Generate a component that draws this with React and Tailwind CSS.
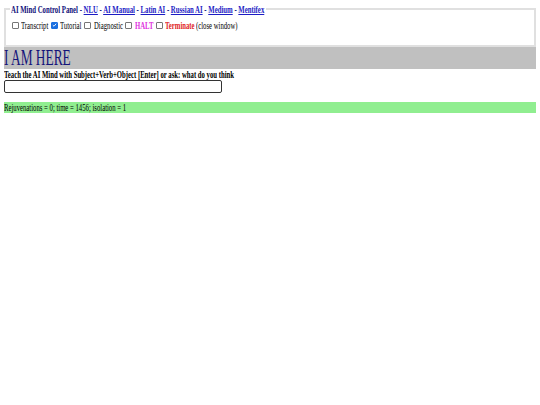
import { useState } from 'react';

// the reference page is drawn narrow, so every text line is squeezed on x
const Check = ({ on, toggle, className = '' }) => (
  <span
    role="checkbox"
    aria-checked={on}
    onClick={toggle}
    className={`flex items-center justify-center w-[7px] h-[7px] shrink-0 rounded-[1px] border ${
      on ? 'bg-[#1a6fe0] border-[#1a6fe0]' : 'bg-white border-[#767676]'
    } ${className}`}
  >
    {on && (
      <svg viewBox="0 0 6 6" className="w-[6px] h-[6px]">
        <path d="M1 3.2 L2.4 4.5 L5 1.5" fill="none" stroke="white" strokeWidth="1.1" />
      </svg>
    )}
  </span>
);

const Label = ({ className, children }) => (
  <span className={`block shrink-0 whitespace-nowrap ${className}`}>
    <span className="block w-max origin-left scale-x-[0.61]">{children}</span>
  </span>
);

const Link = ({ children }) => (
  <a href="#" className="underline text-[#1c1cc4]">{children}</a>
);

export default function App() {
  const [transcript, setTranscript] = useState(false);
  const [tutorial, setTutorial] = useState(true);
  const [diagnostic, setDiagnostic] = useState(false);
  const [halt, setHalt] = useState(false);
  const [terminate, setTerminate] = useState(false);

  return (
    <div className="w-[540px] min-h-[405px] overflow-hidden bg-white px-[4px] font-['Liberation_Serif',serif] text-black">
      <fieldset className="mt-[3px] h-[44px] border-2 border-solid border-[#e0e0e0] px-[6px] min-w-0">
        <legend className="-ml-[2px] px-[1px] w-[256px] h-[12px] text-[11px] leading-[12px] font-bold text-[#10107a]">
          <span className="block w-max origin-left scale-x-[0.615] whitespace-nowrap">
            AI Mind Control Panel - <Link>NLU</Link> - <Link>AI Manual</Link> - <Link>Latin AI</Link> -{' '}
            <Link>Russian AI</Link> - <Link>Medium</Link> - <Link>Mentifex</Link>
          </span>
        </legend>

        <div className="mt-[4px] flex items-center h-[12px] text-[11px] leading-[12px]">
          <Check on={transcript} toggle={() => setTranscript(!transcript)} />
          <Label className="ml-[2px] w-[28px]">Transcript</Label>
          <Check on={tutorial} toggle={() => setTutorial(!tutorial)} className="ml-[2px]" />
          <Label className="ml-[2px] w-[22px]">Tutorial</Label>
          <Check on={diagnostic} toggle={() => setDiagnostic(!diagnostic)} className="ml-[2px]" />
          <Label className="ml-[3px] w-[28px]">Diagnostic</Label>
          <Check on={halt} toggle={() => setHalt(!halt)} className="ml-[3px]" />
          <Label className="ml-[3px] w-[18px] font-bold text-[#e030e0]">HALT</Label>
          <Check on={terminate} toggle={() => setTerminate(!terminate)} className="ml-[3px]" />
          <Label className="ml-[2px] w-[29px] font-bold text-[#e02424]">Terminate</Label>
          <Label className="ml-[2px] w-[42px]">(close window)</Label>
        </div>
      </fieldset>

      <div className="h-[22px] bg-[#c0c0c0]">
        <div className="w-max origin-left scale-x-[0.58] whitespace-nowrap text-[23px] leading-[22px] text-[#14147a]">
          I AM HERE
        </div>
      </div>

      <div className="w-max origin-left scale-x-[0.61] whitespace-nowrap text-[11px] leading-[10px] font-bold">
        Teach the AI Mind with Subject+Verb+Object [Enter] or ask: what do you think
      </div>
      <input
        type="text"
        className="block mt-[1px] w-[218px] h-[13px] border border-[#333] rounded-[2px] bg-white outline-none"
      />

      <div className="mt-[9px] h-[11px] bg-[#90ee90]">
        <div className="w-max origin-left scale-x-[0.61] whitespace-nowrap text-[11px] leading-[11px]">
          Rejuvenations = 0; time = 1456; isolation = 1
        </div>
      </div>
    </div>
  );
}
